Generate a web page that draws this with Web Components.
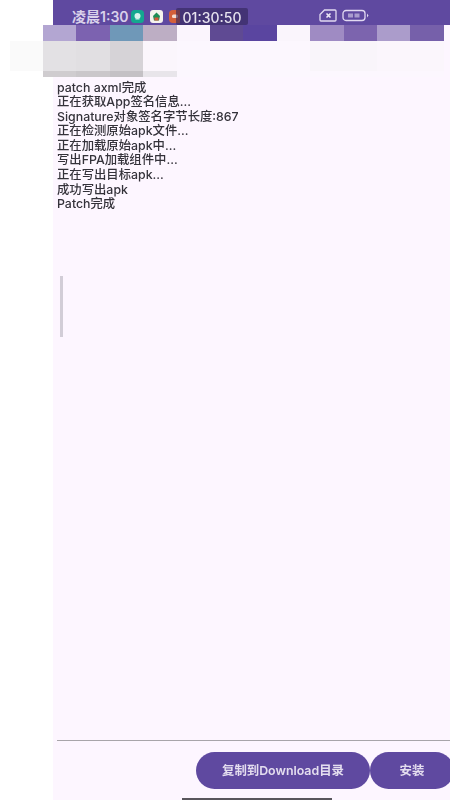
<!DOCTYPE html>
<html lang="zh">
<head>
<meta charset="utf-8">
<style>
html,body{margin:0;padding:0;background:#fff;height:800px;overflow:hidden}
body{font-family:Inter,"Noto Sans CJK SC",sans-serif}
</style>
</head>
<body>
<app-shell>
  <status-bar slot="top" time="凌晨1:30" clock="01:30:50"></status-bar>
  <mosaic-strip slot="top"></mosaic-strip>
  <log-view>
    <div>patch axml完成</div>
    <div>正在获取App签名信息...</div>
    <div>Signature对象签名字节长度:867</div>
    <div>正在检测原始apk文件...</div>
    <div>正在加载原始apk中...</div>
    <div>写出FPA加载组件中...</div>
    <div>正在写出目标apk...</div>
    <div>成功写出apk</div>
    <div>Patch完成</div>
  </log-view>
  <action-bar slot="bottom">
    <pill-button style="width:174px">复制到Download目录</pill-button>
    <pill-button style="width:84px">安装</pill-button>
  </action-bar>
</app-shell>
<script>
function def(name, html, init){
  customElements.define(name, class extends HTMLElement{
    constructor(){super();this.attachShadow({mode:'open'}).innerHTML=html;}
    connectedCallback(){ if(init) init(this); }
  });
}
def('app-shell',`<style>
:host{display:flex;flex-direction:column;width:397px;height:800px;margin-left:53px;background:#fdf6ff;position:relative}
.main{flex:1;min-height:0}
.home{height:2px;width:150px;background:#3c3a40;margin:0 0 0 129px;opacity:.85}
</style><slot name="top"></slot><div class="main"><slot></slot></div><slot name="bottom"></slot><div class="home"></div>`);

def('status-bar',`<style>
:host{display:flex;align-items:center;height:25px;background:#5f49a0;color:#d9d1ea;padding:7px 0 0 19px;box-sizing:border-box;position:relative;font-size:14px;filter:blur(.5px)}
.t{width:59px;white-space:nowrap;font-weight:600}
svg{display:block;flex:none}
.clock{position:absolute;left:123px;top:8px;width:72px;height:17px;background:rgba(48,36,88,.6);color:#e6e2ee;font-size:14px;font-weight:500;line-height:19px;text-align:center;border-radius:2px}
.right{position:absolute;left:266px;top:9px;display:flex;gap:5px;align-items:center}
</style>
<span class="t"></span>
<svg width="13" height="13" viewBox="0 0 13 13" style="margin-right:6px"><rect width="13" height="13" rx="3.5" fill="#14a88f"/><circle cx="6.5" cy="6" r="3" fill="#d8f3ec"/><path d="M4.500 9h4" stroke="#d8f3ec"/></svg>
<svg width="13" height="13" viewBox="0 0 13 13" style="margin-right:6px"><rect width="13" height="13" rx="3" fill="#f6f3ee"/><path d="M6.500 2.500 10 6l-1 4.500H4L3 6z" fill="#1f8d55"/><rect x="4.500" y="7.500" width="4" height="3" fill="#d9583a"/></svg>
<svg width="11" height="13" viewBox="0 0 11 13"><rect width="13" height="13" rx="4" fill="#d4603a"/><rect x="3" y="4.500" width="6" height="3.500" rx="1.500" fill="#f6dccf"/></svg>
<span class="clock"></span>
<div class="right">
<svg width="18" height="13" viewBox="0 0 18 13" fill="none"><path d="M5.500 1H16a1 1 0 0 1 1 1v9a1 1 0 0 1-1 1H2a1 1 0 0 1-1-1V5.500z" stroke="#e2daf1" stroke-width="1.300"/><path d="M7.500 4.500l4 4m0-4-4 4" stroke="#eee9f6" stroke-width="1.600"/></svg>
<svg width="27" height="13" viewBox="0 0 27 13" fill="none"><rect x="1" y="1.500" width="22" height="10" rx="3" stroke="#e2daf1" stroke-width="1.300"/><path d="M25 4.500l1.500 2-1.500 2z" fill="#e2daf1"/><rect x="6" y="4.500" width="5" height="4" fill="#a99ccd"/><rect x="12.500" y="4.500" width="5" height="4" fill="#a99ccd"/></svg>
</div>`, el=>{
  el.shadowRoot.querySelector('.t').textContent=el.getAttribute('time');
  el.shadowRoot.querySelector('.clock').textContent=el.getAttribute('clock');
});

const r1=['#b3a6d2','#7c62b0','#6f98b8','#bdaec4','#fbf5fd','#5f4a93','#5a45a0','#faf5fc','#9f8bc3','#7c64ae','#ab9ccb','#7660aa'];
const r2=['#e3e1e4','#e1dfe2','#d6d3d7','#fbf6fc','#fcf7fe','#fcf7fe','#fcf7fe','#fcf7fe','#f9f5fa','#f9f5fa','#fbf6fc','#fbf6fc'];
const r3=['#cfcccf','#cac7ca','#c4c1c5','#e8e5ea','#fcf7fe','#fcf7fe','#fcf7fe','#fcf7fe','#fcf7fe','#fcf7fe','#fcf7fe','#fcf7fe'];
const cells=a=>a.map(c=>`<i style="background:${c}"></i>`).join('');
def('mosaic-strip',`<style>
:host{display:block;width:400px;margin-left:-10px;position:relative}
.r{display:grid;grid-template-columns:repeat(12,33.4px)}
.a{height:16px}.b{height:30px}.c{height:6px}
i{display:block}
.faint{position:absolute;left:-33px;top:16px;width:33px;height:30px;background:#fafafa}
</style><div class="r a">${cells(r1)}</div><div class="r b">${cells(r2)}</div><div class="r c">${cells(r3)}</div><div class="faint"></div>`);

def('log-view',`<style>
:host{display:block;position:relative;height:100%;padding:3.500px 0 0 4px;box-sizing:border-box;color:#34323a;font-size:12.350px;font-weight:500;line-height:14.600px;filter:blur(.4px)}
.bar{position:absolute;left:7px;top:199px;width:3px;height:61px;background:#d2cdd7}
</style><slot></slot><div class="bar"></div>`);

def('action-bar',`<style>
:host{display:flex;height:58px;box-sizing:border-box;border-top:1.500px solid #a8a5aa;margin-left:4px;padding:10.500px 0 0 139px;white-space:nowrap;overflow:hidden}
</style><slot></slot>`);

def('pill-button',`<style>
:host{display:flex;flex:none;align-items:center;justify-content:center;height:37px;border-radius:19px;background:#5f49a0;color:#e4deef;font-size:12.400px;font-weight:600;filter:blur(.4px)}
</style><slot></slot>`);
</script>
</body>
</html>
